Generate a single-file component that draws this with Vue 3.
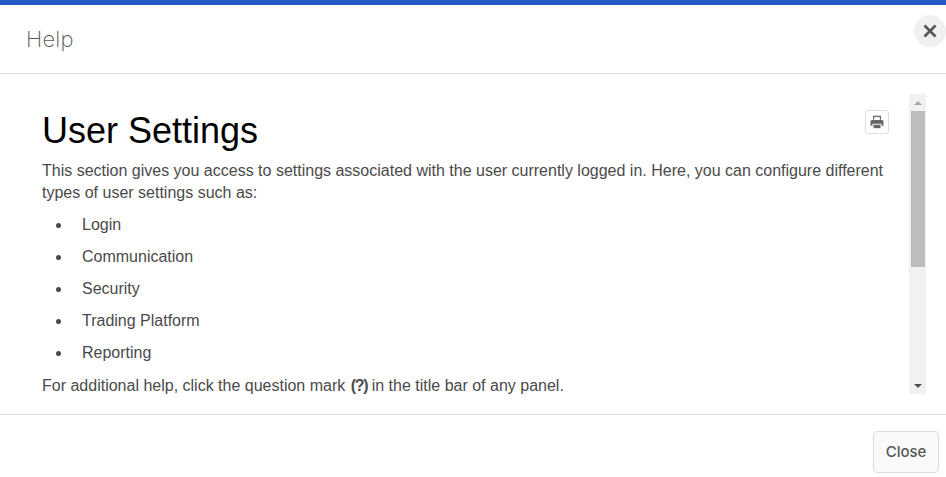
<script setup>
const items = ['Login', 'Communication', 'Security', 'Trading Platform', 'Reporting']
</script>

<template>
  <div class="dialog">
    <header class="head">
      <h2 class="title">Help</h2>
      <button class="x" aria-label="Close">
        <svg width="14" height="14" viewBox="0 0 14 14"><path d="M1.5 1.5L12.5 12.5M12.5 1.5L1.5 12.5" stroke="#555" stroke-width="2.6" fill="none"/></svg>
      </button>
    </header>
    <main class="body">
      <div class="pane">
        <article class="content">
          <h1>User Settings</h1>
          <p class="intro">This section gives you access to settings associated with the user currently logged in. Here, you can configure different types of user settings such as:</p>
          <ul>
            <li v-for="i in items" :key="i">{{ i }}</li>
          </ul>
          <p class="outro">For additional help, click the question mark <b>(?)</b> in the title bar of any panel.</p>
        </article>
        <button class="print" aria-label="Print">
          <svg width="14" height="14" viewBox="0 0 14 14" fill="#666">
            <path d="M3 .8h8v4H9.800V2H4.200v2.800H3z"/>
            <path d="M2 5h10a1.500 1.500 0 0 1 1.500 1.500V10.800H11.500V8.700H2.500v2.100H.5V6.500A1.500 1.500 0 0 1 2 5z"/>
            <path d="M3.500 9.700h7V13.200h-7z"/>
          </svg>
        </button>
      </div>
      <div class="scrollbar">
        <div class="arrow"><span class="up"></span></div>
        <div class="track"><div class="thumb"></div></div>
        <div class="arrow"><span class="down"></span></div>
      </div>
    </main>
    <footer class="foot">
      <button class="close">Close</button>
    </footer>
  </div>
</template>

<style>
html, body { margin: 0; background: #fff; overflow: hidden; }
</style>

<style scoped>
.dialog {
  width: 946px;
  height: 477px;
  display: flex;
  flex-direction: column;
  border-top: 5px solid #2559c3;
  box-sizing: border-box;
  font-family: "Liberation Sans", Arial, sans-serif;
  color: #4a4a4a;
  overflow: hidden;
}
.head {
  height: 69px;
  flex: none;
  box-sizing: border-box;
  border-bottom: 1px solid #ddd;
  display: flex;
  justify-content: space-between;
  padding: 10px 0 0 26px;
}
.title {
  margin: 0;
  font: 200 22px/49px Inter, sans-serif;
  color: #555;
  letter-spacing: 0.2px;
}
.x {
  width: 32px;
  height: 32px;
  border-radius: 50%;
  border: 0;
  padding: 0;
  background: #f0f0f0;
  display: flex;
  align-items: center;
  justify-content: center;
}
.body {
  height: 341px;
  flex: none;
  box-sizing: border-box;
  border-bottom: 1px solid #ddd;
  display: flex;
  padding: 20px 20px 20px 42px;
}
.pane {
  flex: 1;
  min-width: 0;
  display: flex;
  align-items: flex-start;
  justify-content: space-between;
  padding-right: 20px;
}
.content {
  width: 846px;
  flex: none;
  font-size: 16px;
  line-height: 22px;
}
.content h1 {
  margin: 15px 0 0;
  font-size: 36px;
  font-weight: 400;
  line-height: 44px;
  color: #000;
}
.intro { margin: 7px 0 0; }
.content ul {
  margin: 5px 0 0;
  padding: 0 0 0 40px;
  list-style: none;
}
.content li {
  height: 32px;
  line-height: 32px;
  position: relative;
}
.content li::before {
  content: "";
  position: absolute;
  left: -26px;
  top: 14px;
  width: 5px;
  height: 5px;
  border-radius: 50%;
  background: #4a4a4a;
}
.outro { margin: 6px 0 0; }
.outro b { letter-spacing: -1.3px; margin-left: 1px; }
.print {
  position: absolute;
  left: 865px;
  top: 110px;
  width: 24px;
  height: 24px;
  padding: 0;
  border: 1px solid #ddd;
  border-radius: 3px;
  background: #fff;
  display: flex;
  align-items: center;
  justify-content: center;
}
.scrollbar {
  width: 17px;
  height: 300px;
  flex: none;
  background: #f1f1f1;
  display: flex;
  flex-direction: column;
}
.arrow {
  height: 17px;
  flex: none;
  display: flex;
  align-items: center;
  justify-content: center;
}
.up, .down {
  width: 0;
  height: 0;
  border-left: 4px solid transparent;
  border-right: 4px solid transparent;
}
.up { border-bottom: 4px solid #a8a8a8; }
.down { border-top: 4px solid #505050; }
.track { flex: 1; padding: 0 1px 0 2px; }
.thumb { height: 156px; background: #bdbdbd; }
.foot {
  flex: 1;
  display: flex;
  justify-content: flex-end;
  align-items: flex-start;
  padding: 16px 7px 0 0;
}
.close {
  width: 66px;
  height: 42px;
  border: 1px solid #ddd;
  border-radius: 4px;
  background: #fafafa;
  color: #555;
  font: 500 15px Inter, sans-serif;
  padding: 0 0 2px;
}
</style>
